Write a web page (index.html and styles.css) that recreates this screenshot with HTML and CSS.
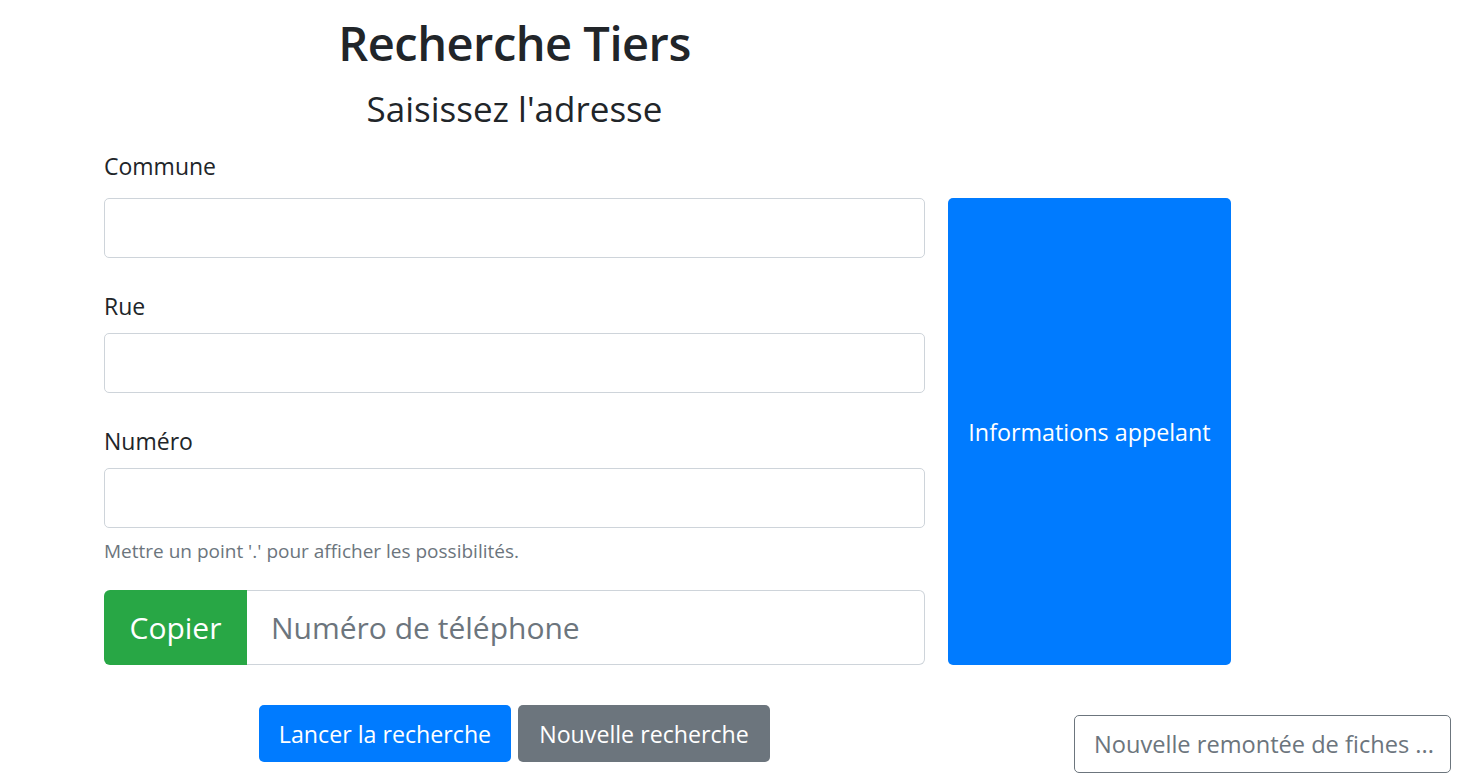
FILE: index.html
```html
<!DOCTYPE html>
<html lang="fr">
<head>
<meta charset="utf-8">
<title>Recherche Tiers</title>
<link rel="stylesheet" href="styles.css">
</head>
<body>
<div class="page">
  <div class="layout">
    <header class="head">
      <h1 class="title">Recherche Tiers</h1>
      <h2 class="subtitle">Saisissez l'adresse</h2>
      <label class="label" for="commune">Commune</label>
    </header>
    <div class="fields">
      <input class="control" id="commune" type="text">
      <label class="label label-gap" for="rue">Rue</label>
      <input class="control" id="rue" type="text">
      <label class="label label-gap" for="numero">Numéro</label>
      <input class="control" id="numero" type="text">
      <p class="help">Mettre un point '.' pour afficher les possibilités.</p>
      <div class="group">
        <button class="copy" type="button">Copier</button>
        <input class="phone" type="text" placeholder="Numéro de téléphone">
      </div>
    </div>
    <button class="caller" type="button">Informations appelant</button>
    <div class="actions">
      <button class="btn btn-primary" type="button">Lancer la recherche</button>
      <button class="btn btn-secondary" type="button">Nouvelle recherche</button>
    </div>
  </div>
  <input class="floating" type="text" placeholder="Nouvelle remontée de fiches ...">
</div>
</body>
</html>
```

FILE: styles.css
```css
* { box-sizing: border-box; }
html, body { margin: 0; padding: 0; background: #fff; }
body {
  font-family: "Open Sans", "Noto Sans", sans-serif;
  color: #212529;
  width: 1457px;
  height: 776px;
  overflow: hidden;
}
.page { padding: 0 0 0 104px; }
.layout {
  display: grid;
  grid-template-columns: 821px 283px;
  column-gap: 23px;
  grid-template-areas:
    "head ."
    "fields caller"
    "actions .";
}
.head { grid-area: head; display: flex; flex-direction: column; }
.title {
  margin: 13px 0 0;
  font-size: 47px;
  font-weight: 600;
  line-height: 60px;
  text-align: center;
  letter-spacing: -0.5px;
}
.subtitle {
  margin: 13px 0 0;
  font-size: 35px;
  font-weight: 400;
  line-height: 46px;
  text-align: center;
}
.label {
  display: block;
  font-size: 23px;
  line-height: 30px;
  margin: 19px 0 17px;
}
.label-gap { margin: 33px 0 12px; }
.fields { grid-area: fields; display: flex; flex-direction: column; }
.control {
  display: block;
  width: 100%;
  height: 60px;
  border: 1px solid #ced4da;
  border-radius: 5px;
  background: #fff;
  font: inherit;
}
.help {
  margin: 10px 0 0;
  font-size: 19px;
  line-height: 26px;
  color: #6c757d;
}
.group {
  display: flex;
  height: 75px;
  margin-top: 26px;
}
.copy {
  width: 143px;
  border: 0;
  border-radius: 6px 0 0 6px;
  background: #28a745;
  color: #fff;
  font-family: inherit;
  font-size: 30px;
}
.phone {
  flex: 1;
  min-width: 0;
  border: 1px solid #ced4da;
  border-left: 0;
  border-radius: 0 6px 6px 0;
  padding: 0 24px;
  font-family: inherit;
  font-size: 30px;
  color: #495057;
}
.phone::placeholder, .floating::placeholder { color: #6c757d; opacity: 1; }
.caller {
  grid-area: caller;
  border: 0;
  border-radius: 5px;
  background: #007bff;
  color: #fff;
  font-family: inherit;
  font-size: 23.3px;
}
.actions {
  grid-area: actions;
  display: flex;
  justify-content: center;
  gap: 7px;
  margin-top: 40px;
}
.btn {
  width: 252px;
  height: 57px;
  border: 0;
  border-radius: 5px;
  color: #fff;
  font-family: inherit;
  font-size: 23.2px;
}
.btn-primary { background: #007bff; }
.btn-secondary { background: #6c757d; }
.floating {
  position: fixed;
  right: 6px;
  bottom: 3px;
  width: 377px;
  height: 58px;
  border: 1px solid #6c757d;
  border-radius: 5px;
  padding: 0 8px 0 19px;
  font-family: inherit;
  font-size: 23.6px;
  background: #fff;
}
```
